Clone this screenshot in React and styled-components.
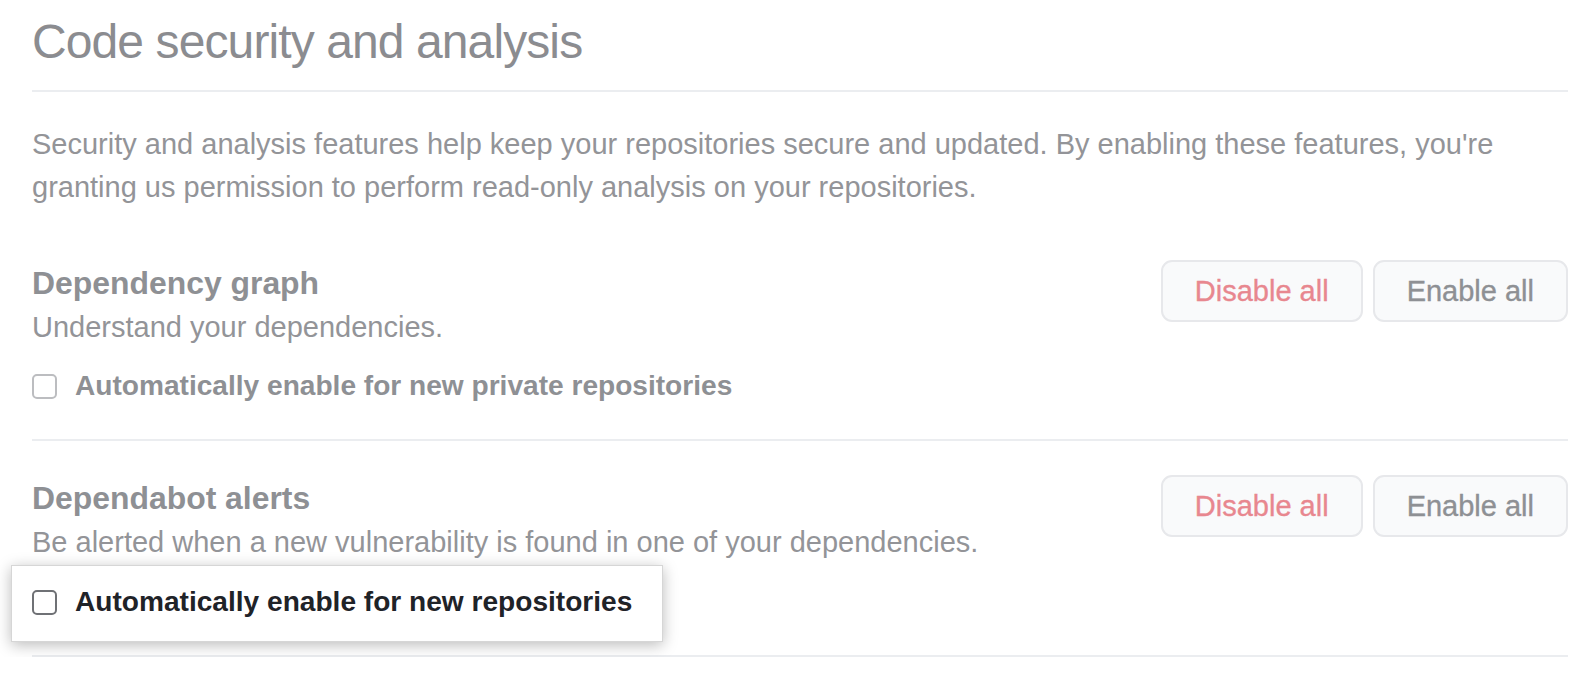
import React from "react";
import styled, { createGlobalStyle } from "styled-components";

const GlobalStyle = createGlobalStyle`
  html, body {
    margin: 0;
    padding: 0;
    background: #ffffff;
  }
  body {
    font-family: "Liberation Sans", Arial, sans-serif;
    -webkit-font-smoothing: antialiased;
  }
`;

const Page = styled.div`
  padding: 0 20px 0 32px;
  width: 1588px;
  box-sizing: border-box;
`;

const Header = styled.div`
  padding-top: 12px;
  padding-bottom: 18px;
  border-bottom: 2px solid #ebedf0;
`;

const Title = styled.h2`
  margin: 0;
  font-size: 48px;
  line-height: 60px;
  font-weight: 400;
  letter-spacing: -0.9px;
  color: #8b8c90;
`;

const Intro = styled.p`
  margin: 31px 0 17px;
  font-size: 29px;
  line-height: 43px;
  color: #939498;
`;

const Section = styled.section`
  display: flex;
  justify-content: space-between;
  align-items: flex-start;
  padding: 34px 0 35px;
  border-bottom: 2px solid #ebedf0;
`;

const Info = styled.div`
  display: flex;
  flex-direction: column;
  align-items: flex-start;
`;

const Heading = styled.h3`
  margin: 0;
  font-size: 31.9px;
  line-height: 46px;
  font-weight: 700;
  color: #8e9094;
`;

const Description = styled.p`
  margin: 0;
  font-size: 29px;
  line-height: 43px;
  color: #939498;
`;

const CheckRow = styled.label`
  display: flex;
  align-items: center;
  gap: 18px;
  height: 36px;
  margin-top: 19px;
  position: relative;
  z-index: ${(p) => (p.$highlight ? 2 : "auto")};
  ${(p) =>
    p.$highlight &&
    `
    height: auto;
    margin: 1px 0 -22px -21px;
    padding: 18px 30px 21px 20px;
    background: #ffffff;
    border: 1px solid #d6d6d6;
    box-shadow: 0 3px 14px rgba(0, 0, 0, 0.27);
  `}
`;

const Box = styled.input.attrs({ type: "checkbox" })`
  appearance: none;
  -webkit-appearance: none;
  margin: 0;
  width: 25px;
  height: 25px;
  box-sizing: border-box;
  border: 2px solid ${(p) => (p.$active ? "#6f7175" : "#bcbdc0")};
  border-radius: 5px;
  background: #ffffff;
  flex: none;
`;

const LabelText = styled.span`
  font-size: 28.1px;
  line-height: 36px;
  font-weight: 700;
  color: ${(p) => (p.$active ? "#1f2328" : "#8e9094")};
  white-space: nowrap;
`;

const Actions = styled.div`
  display: flex;
  gap: 10px;
  align-items: flex-start;
  flex: none;
`;

const Button = styled.button`
  height: 62px;
  padding: 0 32px;
  box-sizing: border-box;
  border: 2px solid #e7e8eb;
  border-radius: 11px;
  background: #f9fafb;
  font-family: "Liberation Sans", Arial, sans-serif;
  font-size: 29px;
  font-weight: 400;
  -webkit-text-stroke: 0.35px currentColor;
  color: ${(p) => (p.$danger ? "#e8878f" : "#8e9094")};
  cursor: pointer;
`;

const features = [
  {
    title: "Dependency graph",
    description: "Understand your dependencies.",
    option: "Automatically enable for new private repositories",
    highlight: false,
  },
  {
    title: "Dependabot alerts",
    description:
      "Be alerted when a new vulnerability is found in one of your dependencies.",
    option: "Automatically enable for new repositories",
    highlight: true,
  },
];

export default function App() {
  return (
    <>
      <GlobalStyle />
      <Page>
        <Header>
          <Title>Code security and analysis</Title>
        </Header>
        <Intro>
          Security and analysis features help keep your repositories secure and
          updated. By enabling these features, you're granting us permission to
          perform read-only analysis on your repositories.
        </Intro>
        {features.map((f) => (
          <Section key={f.title}>
            <Info>
              <Heading>{f.title}</Heading>
              <Description>{f.description}</Description>
              <CheckRow $highlight={f.highlight}>
                <Box $active={f.highlight} />
                <LabelText $active={f.highlight}>{f.option}</LabelText>
              </CheckRow>
            </Info>
            <Actions>
              <Button $danger>Disable all</Button>
              <Button>Enable all</Button>
            </Actions>
          </Section>
        ))}
      </Page>
    </>
  );
}
